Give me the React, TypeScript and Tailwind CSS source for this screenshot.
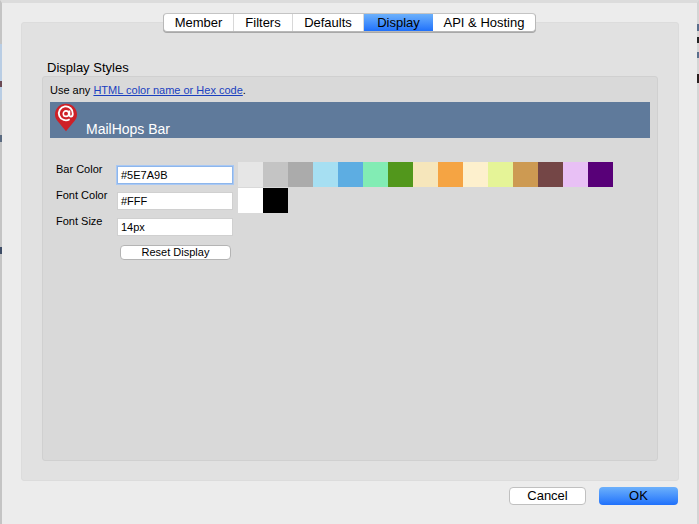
import React from "react";

const swatches = [
  "bg-[#e6e6e6]", "bg-[#c4c4c4]", "bg-[#ababab]", "bg-[#a6dff2]", "bg-[#5dade2]",
  "bg-[#82ecb4]", "bg-[#52971c]", "bg-[#f6e6bb]", "bg-[#f5a443]", "bg-[#fdf0cd]",
  "bg-[#e5f497]", "bg-[#cd9a52]", "bg-[#744646]", "bg-[#e8c0f5]", "bg-[#580078]",
];

function Tab({ label, w, active }: { label: string; w: string; active?: boolean }) {
  return (
    <div
      className={`${w} h-full flex items-center justify-center text-[13px] text-black border-r border-[#d8d8d8] last:border-r-0 ${
        active ? "bg-gradient-to-b from-[#6cb0fb] to-[#1f70fb] border-r-0" : ""
      }`}
    >
      {label}
    </div>
  );
}

function Field({ value, focused }: { value: string; focused?: boolean }) {
  return (
    <div
      className={`w-[116px] h-[18px] bg-white flex items-center pl-[3px] text-[11px] text-black ${
        focused ? "border border-[#8db6ec] shadow-[0_0_0_1px_#a9c8f3]" : "border border-[#d0d0d0]"
      }`}
    >
      {value}
    </div>
  );
}

export default function App() {
  return (
    <div className="relative w-[699px] h-[524px] flex flex-col bg-[#ececec] border-t-[3px] border-t-[#dcdcdc] border-l-2 border-l-[#c4c4c4] border-r-2 border-r-[#d4d4d4] font-['Liberation_Sans',sans-serif]">
      {/* bits of the window behind the sheet, showing at its edges */}
      <div className="absolute -left-[2px] top-[41px] w-[2px] h-[56px] bg-[#b9cde4]" />
      <div className="absolute -left-[2px] top-[78px] w-[2px] h-[6px] bg-[#6b4a55]" />
      <div className="absolute -left-[2px] top-[132px] w-[2px] h-[7px] bg-[#5a6a80]" />
      <div className="absolute -left-[2px] top-[244px] w-[2px] h-[7px] bg-[#3d4c66]" />
      <div className="absolute -right-[2px] top-[21px] w-[2px] h-[7px] bg-[#5a6f8c]" />
      <div className="absolute -right-[2px] top-[34px] w-[2px] h-[6px] bg-[#222222]" />
      <div className="absolute -right-[2px] top-[49px] w-[2px] h-[6px] bg-[#5a6f8c]" />
      <div className="absolute -right-[2px] top-[71px] w-[2px] h-[9px] bg-[#2a1f1f]" />

      {/* tabbed panel */}
      <div className="ml-[19px] mt-[19px] w-[658px] h-[459px] bg-[#e1e1e1] border border-[#dcdcdc] rounded-[3px] flex flex-col">
        <div className="-mt-[10px] ml-[141px] w-[373px] h-[19px] flex bg-white border border-[#b8b8b8] border-t-[#c4c4c4] rounded-[4px] overflow-hidden shrink-0 shadow-[0_1px_0_#a8a8a8]">
          <Tab label="Member" w="w-[70px]" />
          <Tab label="Filters" w="w-[59px]" />
          <Tab label="Defaults" w="w-[71px]" />
          <Tab label="Display" w="w-[69px]" active />
          <Tab label="API & Hosting" w="flex-1" />
        </div>

        <div className="ml-[25px] mt-[28px] text-[13px] leading-[16px] text-black">Display Styles</div>

        <div className="ml-[20px] w-[616px] h-[385px] bg-[#d9d9d9] border border-[#d0d0d0] rounded-[3px] px-[7px] flex flex-col">
          <div className="mt-[6px] h-[15px] text-[11px] leading-[15px] text-black">
            Use any{" "}
            <span className="text-[#1a3fbf] underline">HTML color name or Hex code</span>.
          </div>

          <div className="relative mt-[4px] h-[36px] w-[600px] bg-[#5f7a9b] flex items-end pl-[36px] pb-[1px]">
            <svg className="absolute left-[5px] top-[1px]" width="22" height="29" viewBox="0 0 24 30">
              <path d="M12 0C5.4 0 0 5.2 0 11.6c0 3 1.2 5.4 3 7.4L12 30l9-11c1.8-2 3-4.4 3-7.4C24 5.2 18.6 0 12 0z" fill="#ce2027" />
              <path d="M16 16.8A7.6 7.6 0 1 1 19.4 11c0 1.8-.6 3-2 3-1.2 0-1.7-.9-1.7-2V7.4" fill="none" stroke="#fff" strokeWidth="2" />
              <circle cx="12" cy="10.8" r="3" fill="none" stroke="#fff" strokeWidth="1.7" />
            </svg>
            <span className="text-[14px] leading-[16px] text-white">MailHops Bar</span>
          </div>

          <div className="mt-[24px] flex">
            <div className="ml-[6px] w-[61px] -mt-[1px] flex flex-col gap-[10px] text-[11px] leading-[16px] text-black">
              <div>Bar Color</div>
              <div>Font Color</div>
              <div>Font Size</div>
            </div>
            <div className="mt-[4px] flex flex-col gap-[8px]">
              <Field value="#5E7A9B" focused />
              <Field value="#FFF" />
              <Field value="14px" />
              <div className="ml-[3px] mt-[1px] w-[111px] h-[15px] bg-white border border-[#b4b4b4] rounded-[4px] flex items-center justify-center text-[11px] text-black">
                Reset Display
              </div>
            </div>
            <div className="ml-[5px] flex flex-col gap-[1px]">
              <div className="flex">
                {swatches.map((c) => (
                  <div key={c} className={`w-[25px] h-[25px] ${c}`} />
                ))}
              </div>
              <div className="flex">
                <div className="w-[25px] h-[25px] bg-white" />
                <div className="w-[25px] h-[25px] bg-black" />
              </div>
            </div>
          </div>
        </div>
      </div>

      {/* dialog buttons */}
      <div className="mt-[6px] ml-[507px] flex gap-[13px]">
        <div className="w-[77px] h-[18px] bg-white border border-[#c0c0c0] rounded-[4px] flex items-center justify-center text-[13px] text-black">
          Cancel
        </div>
        <div className="w-[79px] h-[18px] bg-gradient-to-b from-[#6cb0fb] to-[#1f70fb] rounded-[4px] flex items-center justify-center text-[13px] text-black">
          OK
        </div>
      </div>
    </div>
  );
}
